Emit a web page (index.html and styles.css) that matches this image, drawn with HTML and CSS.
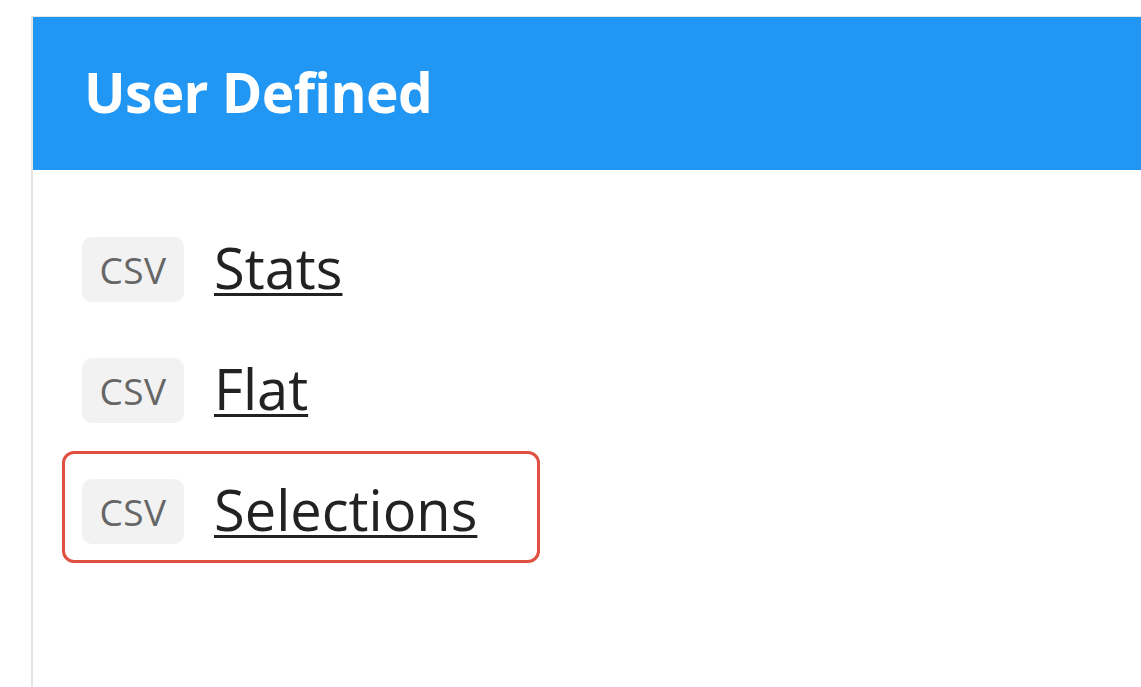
FILE: index.html
```html
<!DOCTYPE html>
<html>
<head>
<meta charset="utf-8">
<link rel="stylesheet" href="styles.css">
</head>
<body>
<div class="card">
  <div class="card-header">User Defined</div>
  <ul class="list">
    <li class="row"><span class="badge">CSV</span><a class="link" href="#">Stats</a></li>
    <li class="row"><span class="badge">CSV</span><a class="link" href="#">Flat</a></li>
    <li class="row highlight"><span class="badge">CSV</span><a class="link" href="#">Selections</a></li>
  </ul>
</div>
</body>
</html>
```
FILE: styles.css
```css
html, body {
  margin: 0;
  padding: 0;
  background: #ffffff;
  height: 100%;
  overflow: hidden;
}
body {
  font-family: "Open Sans", "Noto Sans", sans-serif;
}
.card {
  margin: 16px 0 0 31px;
  border-left: 2px solid #e4e6e6;
  border-top: 1px solid #e4e6e6;
  height: 700px;
}
.card-header {
  background: #2196f3;
  color: #ffffff;
  font-weight: 700;
  font-size: 55px;
  height: 153px;
  display: flex;
  align-items: center;
  padding-left: 51px;
  padding-bottom: 4px;
  box-sizing: border-box;
  letter-spacing: -0.6px;
}
.list {
  list-style: none;
  margin: 0;
  padding: 67px 0 0 49px;
  display: flex;
  flex-direction: column;
  align-items: flex-start;
  gap: 56px;
}
.row {
  display: flex;
  align-items: center;
  gap: 30px;
  position: relative;
  height: 65px;
}
.badge {
  background: #f2f2f2;
  color: #666666;
  border-radius: 10px;
  width: 102px;
  height: 65px;
  display: flex;
  align-items: center;
  justify-content: center;
  font-size: 37px;
  letter-spacing: 0.5px;
}
.link {
  color: #222222;
  font-size: 56px;
  text-decoration: underline;
  text-decoration-thickness: 3px;
  text-underline-offset: 4px;
  margin-top: -6px;
}
.highlight::after {
  content: "";
  position: absolute;
  left: -20px;
  top: -28px;
  right: -63px;
  bottom: -19px;
  border: 3px solid #e05040;
  border-radius: 12px;
}
```
